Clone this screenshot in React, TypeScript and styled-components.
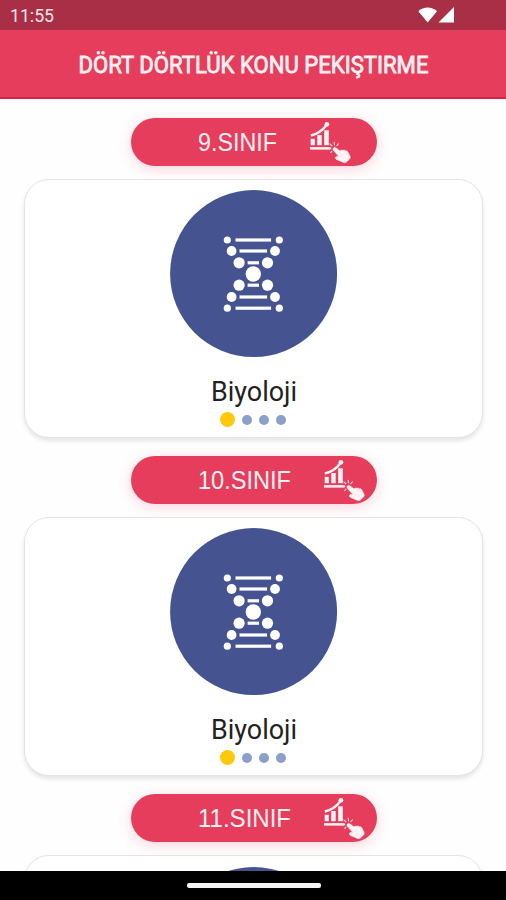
import React from "react";
import styled, { createGlobalStyle } from "styled-components";

const GlobalStyle = createGlobalStyle`
  * { box-sizing: border-box; }
  body { margin: 0; background: #fff; font-family: Roboto, "Noto Sans", sans-serif; }
`;

const Screen = styled.div`
  width: 506px;
  height: 900px;
  display: flex;
  flex-direction: column;
  overflow: hidden;
  background: #fefefe;
`;

const StatusBar = styled.div`
  flex: none;
  height: 30px;
  padding: 0 50px 0 10px;
  display: flex;
  align-items: center;
  justify-content: space-between;
  background: #a92f46;
  color: #fbe6e8;
`;

const Clock = styled.svg`
  display: block;
  width: 60px;
  height: 28px;
  overflow: visible;
  font-size: 17.6px;
`;

const StatusIcons = styled.svg`
  display: block;
  width: 38px;
  height: 18px;
`;

const Header = styled.header`
  flex: none;
  height: 69px;
  padding-left: 1px;
  display: flex;
  align-items: center;
  justify-content: center;
  background: #e63d5c;
  border-bottom: 2px solid #d52648;
`;

const Title = styled.svg`
  display: block;
  width: 350px;
  height: 36px;
  overflow: visible;
  font-size: 23px;
`;

const Content = styled.main`
  flex: 1;
  min-height: 0;
  overflow: hidden;
  padding: 19px 23px 0 24px;
  display: flex;
  flex-direction: column;
`;

const Section = styled.section`
  flex: none;
  height: 338.2px;
  display: flex;
  flex-direction: column;
  align-items: center;
`;

const Pill = styled.button`
  flex: none;
  width: 246px;
  height: 48px;
  margin: 0 0 13px;
  padding: 0 0 0 67px;
  border: 0;
  border-radius: 25px;
  display: flex;
  align-items: center;
  background: #e63d5c;
  box-shadow: 0 3px 14px rgba(240, 61, 102, 0.22);
  color: #fff0f1;
`;

const PillLabel = styled.svg<{ $width: number }>`
  flex: none;
  width: ${(p) => p.$width}px;
  height: 36px;
  overflow: visible;
  font-size: 26px;
`;

const ChartIcon = styled.svg`
  flex: none;
  width: 44px;
  height: 44px;
  margin-left: 32px;
`;

const Card = styled.article`
  width: 459px;
  height: 259px;
  flex: none;
  padding-top: 10.2px;
  border: 1px solid #e4e4e4;
  border-radius: 25px;
  display: flex;
  flex-direction: column;
  align-items: center;
  background: #fff;
  box-shadow: 0 3px 4px rgba(0, 0, 0, 0.1);
`;

const Badge = styled.svg`
  flex: none;
  width: 168px;
  height: 168px;
`;

const Subject = styled.svg`
  flex: none;
  width: 86px;
  height: 36px;
  margin-top: 16px;
  overflow: visible;
  font-size: 27px;
`;

const Dots = styled.div`
  display: flex;
  align-items: center;
  gap: 7px;
  margin: 2px 1px 0 0;
`;

const Dot = styled.span<{ $active?: boolean }>`
  width: ${(p) => (p.$active ? 15 : 10)}px;
  height: ${(p) => (p.$active ? 15 : 10)}px;
  border-radius: 50%;
  background: ${(p) => (p.$active ? "#fec80d" : "#8c9fc8")};
`;

const NavBar = styled.footer`
  flex: none;
  height: 29px;
  display: flex;
  justify-content: center;
  padding-top: 12px;
  background: #000;
`;

const HomeHandle = styled.div`
  width: 134px;
  height: 5px;
  margin-left: 1px;
  border-radius: 2px;
  background: #f4f4f4;
`;

const helixRows = [
  { y: 50, dot: 3.6, dx: 26, line: 17.8 },
  { y: 61, dot: 4.9, dx: 21.7, line: 13.8 },
  { y: 72.8, dot: 5.6, dx: 14.2, line: 5.7 },
  { y: 95.2, dot: 5.6, dx: 14.2, line: 5.7 },
  { y: 107, dot: 4.9, dx: 21.7, line: 13.8 },
  { y: 118.2, dot: 3.6, dx: 26, line: 17.8 },
];

const HelixBadge = () => (
  <Badge viewBox="0 0 168 168">
    <circle cx="83.6" cy="83.6" r="83.5" fill="#455390" />
    <g fill="#fff">
      {helixRows.map((r) => (
        <g key={r.y}>
          <circle cx={83.3 - r.dx} cy={r.y} r={r.dot} />
          <circle cx={83.3 + r.dx} cy={r.y} r={r.dot} />
          <rect x={83.3 - r.line} y={r.y - 1.6} width={r.line * 2} height="3.2" />
        </g>
      ))}
      <circle cx="83.3" cy="84" r="7.7" />
    </g>
  </Badge>
);

const StatsTap = () => (
  <ChartIcon viewBox="0 0 44 44">
    <g fill="#fff3f4">
      <rect x="1.7" y="18.8" width="4.1" height="6.4" />
      <rect x="8.3" y="15" width="4.4" height="10.2" />
      <rect x="15.2" y="10.3" width="4.6" height="14.9" />
      <rect x="1" y="27.1" width="20.5" height="2.5" />
      <circle cx="17.9" cy="4.3" r="2.4" />
      <path d="M24.3 28.2c.8-1.1 2-1 2.9-.1l4 3c.6-1.1 1.8-1.4 2.6-.6.8-.7 1.9-.5 2.5.3 1-.4 2 0 2.4.9l2.2 4.2c.5 1.2.3 2.4-.6 3.3l-2.6 2.5c-1.1 1-2.4 1.1-3.6.5l-6.6-2.8c-1.8-1-1.2-3 .6-2.8l2 .2-5.5-6.2c-.7-.8-.8-1.7-.3-2.4z" stroke="#fff3f4" strokeWidth="0.6" />
    </g>
    <path d="M1.8 15.5C9 13.9 13.5 10.6 17.8 4.7" fill="none" stroke="#fff3f4" strokeWidth="2.4" />
    <path d="M23.2 26l-2.7-2.3M25.5 25.2l-.3-3.3M27.6 26l2.1-2.5M22.3 28.4l-2.6.2M23.2 30.8l-1.8 2" fill="none" stroke="#ffdbe1" strokeWidth="1.1" />
  </ChartIcon>
);

const grades = [
  { label: "9.SINIF", width: 79 },
  { label: "10.SINIF", width: 93 },
  { label: "11.SINIF", width: 93 },
];

export default function App() {
  return (
    <>
      <GlobalStyle />
      <Screen>
        <StatusBar>
          <Clock>
            <text x="0" y="21" fill="currentColor" textLength="44" lengthAdjust="spacingAndGlyphs">11:55</text>
          </Clock>
          <StatusIcons viewBox="0 0 38 18">
            <path d="M.3 5.2C5.7.4 13.6.4 19 5.2L9.7 16.5z" fill="#fff" />
            <path d="M36 1v15.5H20.5z" fill="#fff" />
          </StatusIcons>
        </StatusBar>
        <Header>
          <Title>
            <text x="-0.5" y="27" fill="#fff0f1" stroke="#fff0f1" strokeWidth="0.8" textLength="350" lengthAdjust="spacingAndGlyphs">
              DÖRT DÖRTLÜK KONU PEKIŞTIRME
            </text>
          </Title>
        </Header>
        <Content>
          {grades.map((g) => (
            <Section key={g.label}>
              <Pill>
                <PillLabel $width={g.width}>
                  <text x="0" y="27" fill="currentColor" textLength={g.width} lengthAdjust="spacingAndGlyphs">{g.label}</text>
                </PillLabel>
                <StatsTap />
              </Pill>
              <Card>
                <HelixBadge />
                <Subject>
                  <text x="0" y="26.5" fill="#222" textLength="86" lengthAdjust="spacingAndGlyphs">Biyoloji</text>
                </Subject>
                <Dots>
                  <Dot $active />
                  <Dot />
                  <Dot />
                  <Dot />
                </Dots>
              </Card>
            </Section>
          ))}
        </Content>
        <NavBar>
          <HomeHandle />
        </NavBar>
      </Screen>
    </>
  );
}
